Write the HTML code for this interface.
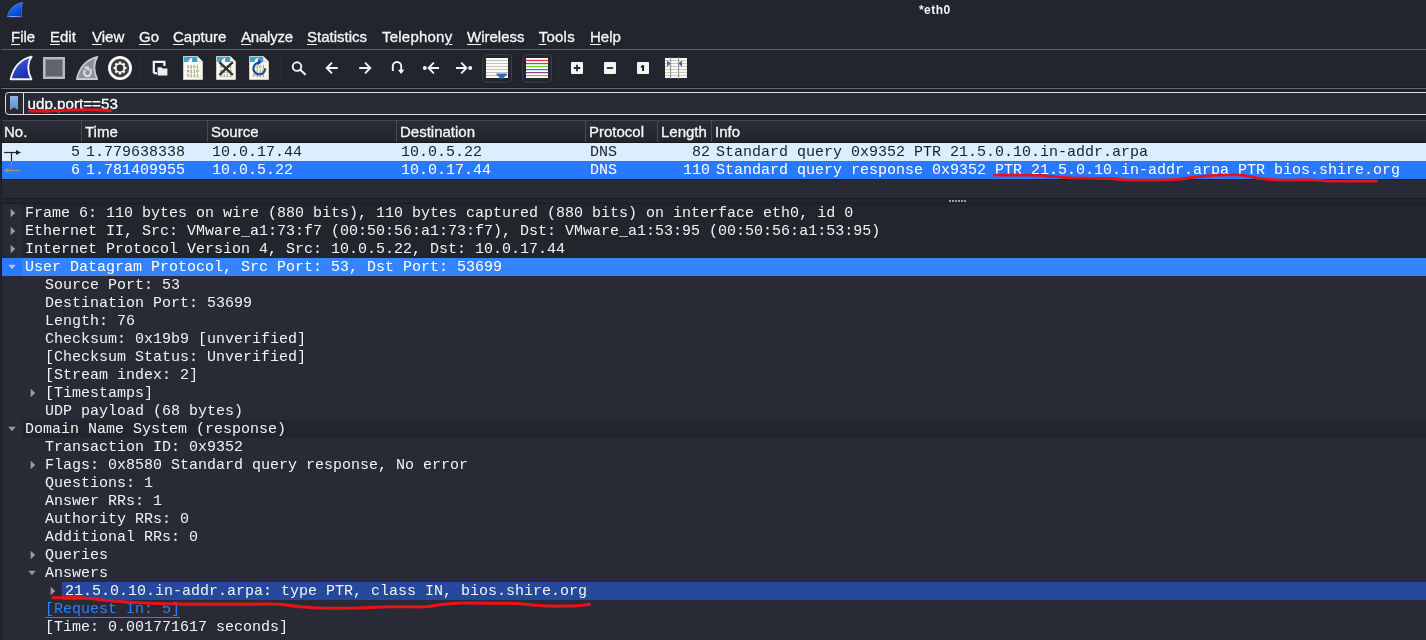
<!DOCTYPE html>
<html><head><meta charset="utf-8">
<style>
html,body{margin:0;padding:0;}
body{width:1426px;height:640px;overflow:hidden;background:#23252e;position:relative;font-family:"Liberation Sans",sans-serif;color:#fff;}
#root{position:absolute;left:0;top:0;width:1426px;height:640px;will-change:transform;overflow:hidden;}
.abs{position:absolute;}
#title{left:919px;top:1.5px;font-size:12px;font-weight:bold;line-height:16px;color:#f4f4f4;letter-spacing:0.45px;}
.menu{top:28px;font-size:15px;line-height:18px;color:#f6f6f6;white-space:nowrap;-webkit-text-stroke:0.3px #f6f6f6;}
.menu u{text-decoration:underline;text-underline-offset:2px;text-decoration-thickness:1.4px;}
.hl{left:1px;right:0;height:1px;}
.ico{position:absolute;overflow:visible;}
#fbar{left:0;top:89px;width:1426px;height:31px;background:#1e2027;}
#filter{left:5px;top:92px;width:1440px;height:21px;border:1px solid #e4e1da;border-radius:3.5px;background:#272935;}
#filter .sep{position:absolute;left:17px;top:0;width:1px;height:21px;background:#e4e1da;}
#ftext{left:27.5px;top:95px;font-size:15.2px;line-height:18px;color:#fff;-webkit-text-stroke:0.3px #fff;}
#lpane{left:1px;top:120px;width:1425px;height:78px;background:#282a36;border-left:1px solid #1b1c23;border-bottom:1px solid #1b1c23;}
#hdr{left:2px;top:120px;right:0;height:21px;background:linear-gradient(#2a2d37,#23252c);border-top:1px solid #43454d;border-bottom:1px solid #17181d;}
.hc{position:absolute;top:123px;font-size:15px;line-height:18px;color:#f6f6f6;-webkit-text-stroke:0.3px #f6f6f6;}
.hs{position:absolute;top:120px;width:1px;height:22px;background:#484a53;}
#tpane{left:1px;top:203px;width:1425px;height:437px;background:#282a36;border-left:1px solid #1b1c23;border-top:1px solid #1b1c23;}
.mono{font-family:"Liberation Mono",monospace;font-size:15px;line-height:18px;white-space:pre;}
.row{position:absolute;left:2px;right:0;height:18px;}
.row span{position:absolute;top:1px;}
.tr{position:absolute;left:2px;right:0;height:18px;}
.tr .t{position:absolute;top:1px;color:#f2f2f2;}
.tr .pb{position:absolute;left:20px;right:0;top:0;height:18px;background:#23252d;}
.tri{position:absolute;}
</style></head><body><div id="root">
<!-- title -->
<svg class="abs" style="left:6px;top:1px" width="18" height="17" viewBox="0 0 18 17"><path d="M1.2 15.9 C2.8 8.6 7.5 3 16.9 1.3 C15.2 5.6 15.2 11 15.9 15.9 Z" fill="url(#gtitle)" stroke="#8fbcff" stroke-opacity="0.55" stroke-width="0.6"/><path d="M1.2 15.9C5 14.6 11 14.8 15.9 15.9Z" fill="#9db8ff" opacity="0.8"/></svg>

<!-- menu -->
<div class="abs menu" style="left:11px"><u>F</u>ile</div>
<div class="abs menu" style="left:50px"><u>E</u>dit</div>
<div class="abs menu" style="left:92px"><u>V</u>iew</div>
<div class="abs menu" style="left:139px"><u>G</u>o</div>
<div class="abs menu" style="left:173px"><u>C</u>apture</div>
<div class="abs menu" style="left:241px;letter-spacing:-0.2px"><u>A</u>nalyze</div>
<div class="abs menu" style="left:307px"><u>S</u>tatistics</div>
<div class="abs menu" style="left:382px;letter-spacing:0.22px">Telephon<u>y</u></div>
<div class="abs menu" style="left:467px"><u>W</u>ireless</div>
<div class="abs menu" style="left:538.7px;letter-spacing:0.25px"><u>T</u>ools</div>
<div class="abs menu" style="left:590px"><u>H</u>elp</div>
<div class="abs hl" style="top:49px;background:#5c5e66"></div>
<div class="abs hl" style="top:87px;background:#1b1c23"></div><div class="abs hl" style="top:88px;background:#6c6e76"></div>
<!-- TOOLBAR -->
<div id="tb"><svg width="0" height="0" style="position:absolute"><defs>
<linearGradient id="gfin" x1="0" y1="0" x2="0.6" y2="1"><stop offset="0" stop-color="#5f7ce4"/><stop offset="0.5" stop-color="#3049c9"/><stop offset="1" stop-color="#1a2eae"/></linearGradient>
<linearGradient id="gtitle" x1="0.2" y1="0" x2="0.8" y2="1"><stop offset="0" stop-color="#2f86f5"/><stop offset="0.6" stop-color="#0b55dd"/><stop offset="1" stop-color="#0a3cc0"/></linearGradient>
<linearGradient id="gbm" x1="0" y1="0" x2="0" y2="1"><stop offset="0" stop-color="#8db4e2"/><stop offset="1" stop-color="#5b90cf"/></linearGradient>
<linearGradient id="gband" x1="0" y1="0" x2="1" y2="0"><stop offset="0" stop-color="#3aa6ec"/><stop offset="1" stop-color="#2a98e2"/></linearGradient>
<linearGradient id="gpaper" x1="0" y1="0" x2="1" y2="1"><stop offset="0" stop-color="#ffffff"/><stop offset="0.6" stop-color="#fbfbee"/><stop offset="1" stop-color="#efeedd"/></linearGradient>
</defs></svg>
<!-- start capture (blue fin) -->
<svg class="ico" style="left:9px;top:55px" width="24" height="26" viewBox="0 0 24 26">
<path d="M1.6 24.2 C4.2 13 10.5 4.5 22.6 1.6 C18.2 8 18.2 17 22.4 24.2 Z" fill="url(#gfin)" stroke="#f4f4f4" stroke-width="1.9" stroke-linejoin="round"/></svg>
<!-- stop (grey square) -->
<svg class="ico" style="left:43px;top:57px" width="22" height="22" viewBox="0 0 22 22">
<rect x="1.25" y="1.25" width="19.5" height="19.5" fill="#60636e" stroke="#b7bac6" stroke-width="2.5"/></svg>
<!-- restart (grey fin) -->
<svg class="ico" style="left:75px;top:55px" width="24" height="26" viewBox="0 0 24 26">
<path d="M1.8 24 C4.4 13 10.6 4.6 22.4 1.8 C18.4 8 18.4 17 22.2 24 Z" fill="#8d909a" stroke="#c6c9d3" stroke-width="1.8" stroke-linejoin="round"/>
<path d="M15.7 13.6V17.8A3.3 3.3 0 0 1 9.05 17.8C9.05 16.7 9.6 15.9 10.6 15.2" fill="none" stroke="#d6d9e2" stroke-width="2.1"/>
<path d="M8.4 12L14.2 11.3L13.8 16.3Z" fill="#d6d9e2"/></svg>
<!-- options gear -->
<svg class="ico" style="left:107px;top:55px" width="26" height="26" viewBox="0 0 26 26">
<circle cx="13" cy="13" r="10.6" fill="#3d3d3f" stroke="#fdfdfd" stroke-width="2.7"/>
<g fill="#fdfdfd"><circle cx="13" cy="13" r="5"/>
<g id="teeth"><rect x="11.8" y="6.6" width="2.4" height="2.6" rx="0.5"/><rect x="11.8" y="16.8" width="2.4" height="2.6" rx="0.5"/></g>
<use href="#teeth" transform="rotate(45 13 13)"/><use href="#teeth" transform="rotate(90 13 13)"/><use href="#teeth" transform="rotate(135 13 13)"/></g>
<circle cx="13" cy="13" r="3.4" fill="#353537"/></svg>
<!-- open file -->
<svg class="ico" style="left:152px;top:60px" width="17" height="17" viewBox="0 0 17 17">
<path d="M1.8 13.2V1.8H12.4V6" fill="none" stroke="#f4f4f4" stroke-width="2.2" stroke-linejoin="miter"/>
<path d="M1.8 13.2H5" fill="none" stroke="#f4f4f4" stroke-width="2.2"/>
<path d="M5.6 15.6V7.2H9.4L10.6 8.6H15.4V15.6Z" fill="#ededed"/></svg>
<!-- file icons -->
<svg class="ico" style="left:182px;top:55px" width="22" height="26" viewBox="0 0 22 26">
<g id="paper"><path d="M1.5 1.5H15.5L20.5 6.5V24.5H1.5Z" fill="url(#gpaper)" stroke="#cfccb4" stroke-width="1"/>
<path d="M2 2H15.3L19.6 7H2Z" fill="url(#gband)"/><path d="M15.3 1.8L20.2 6.7H15.3Z" fill="#fafaf0" stroke="#d8d6c4" stroke-width="0.5"/>
<path d="M6.2 7.2C6.6 5 8.2 3.2 10.6 2.6C9.8 4.2 9.8 5.8 10.4 7.2Z" fill="#fdfdf6"/></g>
<g id="bits" fill="none" stroke="#8c8c86" stroke-width="0.75"><ellipse cx="6.10" cy="11.60" rx="0.85" ry="1.3"/><path d="M8.50 10.90L9.30 10.20V13.10M8.40 13.00H10.20"/><ellipse cx="12.30" cy="11.60" rx="0.85" ry="1.3"/><path d="M14.70 10.90L15.50 10.20V13.10M14.60 13.00H16.40"/><ellipse cx="6.10" cy="16.00" rx="0.85" ry="1.3"/><path d="M8.50 15.30L9.30 14.60V17.50M8.40 17.40H10.20"/><path d="M11.60 15.30L12.40 14.60V17.50M11.50 17.40H13.30"/><ellipse cx="15.40" cy="16.00" rx="0.85" ry="1.3"/><ellipse cx="6.10" cy="20.30" rx="0.85" ry="1.3"/><path d="M8.50 19.60L9.30 18.90V21.80M8.40 21.70H10.20"/><path d="M11.60 19.60L12.40 18.90V21.80M11.50 21.70H13.30"/><path d="M14.70 19.60L15.50 18.90V21.80M14.60 21.70H16.40"/></g></svg>
<svg class="ico" style="left:215px;top:55px" width="22" height="26" viewBox="0 0 22 26"><use href="#paper"/><use href="#bits"/>
<path d="M4.4 7.2L17.8 20M17.8 7.2L4.4 20" stroke="#2d2f33" stroke-width="2.4" fill="none"/></svg>
<svg class="ico" style="left:248px;top:55px" width="22" height="26" viewBox="0 0 22 26"><use href="#paper"/><use href="#bits"/>
<path d="M17.2 13.3 A5.9 5.9 0 1 1 10.3 7.7" fill="none" stroke="#1c4a98" stroke-width="2.1"/>
<path d="M9.8 4.4L13.8 7.3L9.8 10.2Z" fill="#1c4a98"/></svg>
<!-- search -->
<svg class="ico" style="left:290px;top:60px" width="18" height="18" viewBox="0 0 18 18">
<circle cx="7" cy="6.6" r="4.3" fill="none" stroke="#f4f4f4" stroke-width="1.9"/><path d="M10.2 9.8L15.6 14.8" stroke="#f4f4f4" stroke-width="2.1" fill="none"/></svg>
<!-- back / forward -->
<svg class="ico" style="left:325px;top:61px" width="14" height="14" viewBox="0 0 14 14"><path d="M12.8 7H2.4M7 1.6L1.7 7L7 12.4" fill="none" stroke="#f4f4f4" stroke-width="1.9"/></svg>
<svg class="ico" style="left:358px;top:61px" width="14" height="14" viewBox="0 0 14 14"><path d="M1.2 7H11.6M7 1.6L12.3 7L7 12.4" fill="none" stroke="#f4f4f4" stroke-width="1.9"/></svg>
<!-- goto (u-turn) -->
<svg class="ico" style="left:390px;top:60px" width="16" height="16" viewBox="0 0 16 16">
<path d="M2.8 11V6.2A4.2 4.2 0 0 1 11.2 6.2V11" fill="none" stroke="#f4f4f4" stroke-width="1.9"/><path d="M7.9 9.8H14.3L11.1 14Z" fill="#f4f4f4"/></svg>
<!-- first / last -->
<svg class="ico" style="left:422px;top:61px" width="18" height="14" viewBox="0 0 18 14"><circle cx="2.8" cy="7" r="2" fill="#f4f4f4"/><path d="M17 7H7.4M11.8 1.6L6.6 7L11.8 12.4" fill="none" stroke="#f4f4f4" stroke-width="1.9"/></svg>
<svg class="ico" style="left:455px;top:61px" width="18" height="14" viewBox="0 0 18 14"><circle cx="15.2" cy="7" r="2" fill="#f4f4f4"/><path d="M1 7H10.6M6.2 1.6L11.4 7L6.2 12.4" fill="none" stroke="#f4f4f4" stroke-width="1.9"/></svg>
<!-- autoscroll button -->
<div class="abs" style="left:482px;top:54px;width:28px;height:27px;border:1px solid #3b3e49;border-radius:4px;background:#242731;box-shadow:0 0 0 1px #1f2128"></div>
<svg class="ico" style="left:486px;top:58px" width="22" height="20" viewBox="0 0 22 20"><rect width="22" height="20" fill="#fbfbf7"/>
<g stroke="#c4c3b6" stroke-width="1"><path d="M0 2.5H22M0 5.5H22M0 8.5H22M0 11.5H22M0 14.5H22M0 17.5H22"/></g>
<path d="M11 16.2H20.4L15.7 20.4Z" fill="#3568bd" stroke="#3568bd" stroke-width="1.4" stroke-linejoin="round"/></svg>
<!-- colorize button -->
<div class="abs" style="left:522px;top:54px;width:28px;height:27px;border:1px solid #3b3e49;border-radius:4px;background:#242731;box-shadow:0 0 0 1px #1f2128"></div>
<svg class="ico" style="left:526px;top:58px" width="22" height="20" viewBox="0 0 22 20"><rect width="22" height="20" fill="#fdfdfb"/>
<path d="M0 2.5H22" stroke="#ee2a2a" stroke-width="1.2"/><path d="M0 5.6H22" stroke="#3a6fc4" stroke-width="1.2"/><path d="M0 8.6H22" stroke="#6fd21c" stroke-width="1.2"/>
<path d="M0 11.6H22" stroke="#3a6fc4" stroke-width="1.2"/><path d="M0 14.6H22" stroke="#7a4a90" stroke-width="1.2"/><path d="M0 17.6H22" stroke="#c9a21a" stroke-width="1.2"/></svg>
<!-- zoom in/out/1 -->
<svg class="ico" style="left:570px;top:61px" width="14" height="14" viewBox="0 0 14 14"><rect x="1" y="1" width="12" height="12" rx="1" fill="#f3f3f1"/><path d="M3.8 7H10.2M7 3.8V10.2" stroke="#26272c" stroke-width="1.8"/></svg>
<svg class="ico" style="left:603px;top:61px" width="14" height="14" viewBox="0 0 14 14"><rect x="1" y="1" width="12" height="12" rx="1" fill="#f3f3f1"/><path d="M3.8 7H10.2" stroke="#26272c" stroke-width="1.8"/></svg>
<svg class="ico" style="left:636px;top:61px" width="14" height="14" viewBox="0 0 14 14"><rect x="1" y="1" width="12" height="12" rx="1" fill="#f3f3f1"/><path d="M7.1 4.2V10" stroke="#1f2025" stroke-width="2" fill="none"/><path d="M5 6.3L7 4.7" stroke="#1f2025" stroke-width="1.5" fill="none"/></svg>
<!-- resize columns -->
<svg class="ico" style="left:665px;top:57px" width="23" height="22" viewBox="0 0 23 22"><rect x="0" y="1" width="22" height="20" fill="#f8f8f4"/>
<g stroke="#cbcac0" stroke-width="1"><path d="M0 3.5H22M0 6.5H22M0 9.5H22M0 12.5H22M0 15.5H22M0 18.5H22"/></g>
<path d="M5.6 0V22M13.6 0V22" stroke="#8f8f88" stroke-width="1"/>
<path d="M2 3.4V9.8L5.6 6.6Z" fill="#2f66b8"/><path d="M17 3.4V9.8L13.4 6.6Z" fill="#2f66b8"/></svg>
<!-- toolbar separators -->
<div class="abs" style="left:140px;top:56px;width:1px;height:26px;background:#282a33"></div>
<div class="abs" style="left:280px;top:56px;width:1px;height:26px;background:#282a33"></div>
<div class="abs" style="left:558px;top:56px;width:1px;height:26px;background:#272932"></div>
</div>
<!-- filter -->
<div id="fbar" class="abs"></div>
<div id="filter" class="abs"><div class="sep"></div></div>
<svg class="abs" style="left:10px;top:96px" width="9" height="15" viewBox="0 0 9 15"><path d="M0 0H8V14.2L4 11.2L0 14.2Z" fill="url(#gbm)"/></svg>
<div id="ftext" class="abs">udp.port==53</div>
<!-- header -->
<div id="lpane" class="abs"></div>
<div id="tpane" class="abs"></div>
<div id="hdr" class="abs"></div>
<!-- LIST -->
<div id="list"><div class="hc" style="left:4px">No.</div>
<div class="hc" style="left:85px">Time</div>
<div class="hc" style="left:211px">Source</div>
<div class="hc" style="left:400px">Destination</div>
<div class="hc" style="left:589px">Protocol</div>
<div class="hc" style="left:661px">Length</div>
<div class="hc" style="left:715px">Info</div>
<div class="hs" style="left:81px"></div>
<div class="hs" style="left:207px"></div>
<div class="hs" style="left:396px"></div>
<div class="hs" style="left:585px"></div>
<div class="hs" style="left:657px"></div>
<div class="hs" style="left:711px"></div>
<div class="row mono" style="top:143px;background:#daeeff;color:#1d2026"><span style="left:0;width:78px;text-align:right">5</span><span style="left:84px">1.779638338</span><span style="left:210px">10.0.17.44</span><span style="left:399px">10.0.5.22</span><span style="left:588px">DNS</span><span style="left:585px;width:123px;text-align:right">82</span><span style="left:714px">Standard query 0x9352 PTR 21.5.0.10.in-addr.arpa</span></div>
<div class="row mono" style="top:161px;background:#2979ff;color:#ffffff"><span style="left:0;width:78px;text-align:right">6</span><span style="left:84px">1.781409955</span><span style="left:210px">10.0.5.22</span><span style="left:399px">10.0.17.44</span><span style="left:588px">DNS</span><span style="left:585px;width:123px;text-align:right">110</span><span style="left:714px">Standard query response 0x9352 PTR 21.5.0.10.in-addr.arpa PTR bios.shire.org</span></div>
<div class="abs" style="left:2px;right:0;top:179px;height:1px;background:#1f2026"></div>
<svg class="abs" style="left:0;top:143px" width="30" height="36" viewBox="0 0 30 36">
<path d="M4 9.5H16.5" stroke="#22252c" stroke-width="1.2" fill="none"/><path d="M16 7L21 9.5L16 12Z" fill="#22252c"/>
<path d="M11.5 9.5V27.5" stroke="#22252c" stroke-width="1.2" fill="none"/>
<path d="M11.5 18V27.5" stroke="#8f8a80" stroke-width="1.2" fill="none"/>
<path d="M6 27.5H20" stroke="#9c9588" stroke-width="1.2" fill="none"/><path d="M8.5 25L3.5 27.5L8.5 30Z" fill="#9c9588"/>
</svg>
<svg class="abs" style="left:949px;top:200px" width="18" height="2"><rect x="0" y="0" width="2" height="2" fill="#9c9c9c"/><rect x="3" y="0" width="2" height="2" fill="#9c9c9c"/><rect x="6" y="0" width="2" height="2" fill="#9c9c9c"/><rect x="9" y="0" width="2" height="2" fill="#9c9c9c"/><rect x="12" y="0" width="2" height="2" fill="#9c9c9c"/><rect x="15" y="0" width="2" height="2" fill="#9c9c9c"/></svg></div>
<!-- TREE -->
<div id="tree"><div class="tr" style="top:204px;"><div class="pb"></div><svg class="tri" style="left:7.5px;top:4px" width="6" height="10" viewBox="0 0 6 10"><path d="M0.7 0.7L5.2 5L0.7 9.3Z" fill="#9b9b9b"/></svg><span class="t mono" style="left:23px;">Frame 6: 110 bytes on wire (880 bits), 110 bytes captured (880 bits) on interface eth0, id 0</span></div>
<div class="tr" style="top:222px;"><div class="pb"></div><svg class="tri" style="left:7.5px;top:4px" width="6" height="10" viewBox="0 0 6 10"><path d="M0.7 0.7L5.2 5L0.7 9.3Z" fill="#9b9b9b"/></svg><span class="t mono" style="left:23px;">Ethernet II, Src: VMware_a1:73:f7 (00:50:56:a1:73:f7), Dst: VMware_a1:53:95 (00:50:56:a1:53:95)</span></div>
<div class="tr" style="top:240px;"><div class="pb"></div><svg class="tri" style="left:7.5px;top:4px" width="6" height="10" viewBox="0 0 6 10"><path d="M0.7 0.7L5.2 5L0.7 9.3Z" fill="#9b9b9b"/></svg><span class="t mono" style="left:23px;">Internet Protocol Version 4, Src: 10.0.5.22, Dst: 10.0.17.44</span></div>
<div class="tr" style="top:258px;background:#2979ff;"><div class="pb" style="background:#3583fd"></div><svg class="tri" style="left:6px;top:6px" width="8" height="6" viewBox="0 0 8 6"><path d="M0.3 0.7H7.7L4 5.3Z" fill="#a9c9ff"/></svg><span class="t mono" style="left:23px;color:#fff;">User Datagram Protocol, Src Port: 53, Dst Port: 53699</span></div>
<div class="tr" style="top:276px;"><span class="t mono" style="left:43px;">Source Port: 53</span></div>
<div class="tr" style="top:294px;"><span class="t mono" style="left:43px;">Destination Port: 53699</span></div>
<div class="tr" style="top:312px;"><span class="t mono" style="left:43px;">Length: 76</span></div>
<div class="tr" style="top:330px;"><span class="t mono" style="left:43px;">Checksum: 0x19b9 [unverified]</span></div>
<div class="tr" style="top:348px;"><span class="t mono" style="left:43px;">[Checksum Status: Unverified]</span></div>
<div class="tr" style="top:366px;"><span class="t mono" style="left:43px;">[Stream index: 2]</span></div>
<div class="tr" style="top:384px;"><svg class="tri" style="left:27.5px;top:4px" width="6" height="10" viewBox="0 0 6 10"><path d="M0.7 0.7L5.2 5L0.7 9.3Z" fill="#9b9b9b"/></svg><span class="t mono" style="left:43px;">[Timestamps]</span></div>
<div class="tr" style="top:402px;"><span class="t mono" style="left:43px;">UDP payload (68 bytes)</span></div>
<div class="tr" style="top:420px;"><div class="pb"></div><svg class="tri" style="left:6px;top:6px" width="8" height="6" viewBox="0 0 8 6"><path d="M0.3 0.7H7.7L4 5.3Z" fill="#9b9b9b"/></svg><span class="t mono" style="left:23px;">Domain Name System (response)</span></div>
<div class="tr" style="top:438px;"><span class="t mono" style="left:43px;">Transaction ID: 0x9352</span></div>
<div class="tr" style="top:456px;"><svg class="tri" style="left:27.5px;top:4px" width="6" height="10" viewBox="0 0 6 10"><path d="M0.7 0.7L5.2 5L0.7 9.3Z" fill="#9b9b9b"/></svg><span class="t mono" style="left:43px;">Flags: 0x8580 Standard query response, No error</span></div>
<div class="tr" style="top:474px;"><span class="t mono" style="left:43px;">Questions: 1</span></div>
<div class="tr" style="top:492px;"><span class="t mono" style="left:43px;">Answer RRs: 1</span></div>
<div class="tr" style="top:510px;"><span class="t mono" style="left:43px;">Authority RRs: 0</span></div>
<div class="tr" style="top:528px;"><span class="t mono" style="left:43px;">Additional RRs: 0</span></div>
<div class="tr" style="top:546px;"><svg class="tri" style="left:27.5px;top:4px" width="6" height="10" viewBox="0 0 6 10"><path d="M0.7 0.7L5.2 5L0.7 9.3Z" fill="#9b9b9b"/></svg><span class="t mono" style="left:43px;">Queries</span></div>
<div class="tr" style="top:564px;"><svg class="tri" style="left:26px;top:6px" width="8" height="6" viewBox="0 0 8 6"><path d="M0.3 0.7H7.7L4 5.3Z" fill="#9b9b9b"/></svg><span class="t mono" style="left:43px;">Answers</span></div>
<div class="tr" style="top:582px;"><div style="position:absolute;left:60px;right:0;top:0;height:18px;background:#254a9b"></div><svg class="tri" style="left:47.5px;top:4px" width="6" height="10" viewBox="0 0 6 10"><path d="M0.7 0.7L5.2 5L0.7 9.3Z" fill="#9b9b9b"/></svg><span class="t mono" style="left:63px;">21.5.0.10.in-addr.arpa: type PTR, class IN, bios.shire.org</span></div>
<div class="tr" style="top:600px;"><span class="t mono" style="left:43px;color:#2a82ff;text-decoration:underline;text-underline-offset:3.5px;text-decoration-thickness:1.2px;text-decoration-skip-ink:none;">[Request In: 5]</span></div>
<div class="tr" style="top:618px;"><span class="t mono" style="left:43px;">[Time: 0.001771617 seconds]</span></div>
<div class="tr" style="top:636px;"></div>
<svg class="abs" style="left:0;top:0;pointer-events:none" width="1426" height="640" viewBox="0 0 1426 640" fill="none" stroke="#e3141b" stroke-linecap="round" stroke-linejoin="round">
<path d="M29.5 111.1 C32.9 111.1 44.2 111.2 50.0 111.0 C55.8 110.8 58.2 110.4 64.0 110.2 C69.8 110.0 78.6 109.8 85.0 109.8 C91.4 109.8 98.3 109.8 102.6 110.0 C106.8 110.2 109.2 110.8 110.5 111.0" stroke-width="3"/>
<path d="M994.5 175.1 C998.8 175.1 1012.2 175.0 1020.0 175.1 C1027.8 175.2 1034.0 175.0 1041.0 175.4 C1048.0 175.8 1055.0 176.8 1062.0 177.3 C1069.0 177.8 1074.8 178.0 1083.0 178.2 C1091.2 178.4 1104.0 178.2 1111.0 178.5 C1118.0 178.8 1119.2 179.6 1125.0 179.9 C1130.8 180.2 1139.0 180.1 1146.0 180.1 C1153.0 180.1 1161.3 180.1 1167.0 179.9 C1172.7 179.8 1175.3 179.7 1180.0 179.2 C1184.7 178.7 1189.0 177.7 1195.4 177.0 C1201.8 176.3 1210.9 175.5 1218.6 175.2 C1226.3 174.9 1235.3 174.7 1241.7 175.2 C1248.1 175.7 1250.8 177.2 1257.0 178.0 C1263.2 178.8 1269.8 179.8 1278.8 180.1 C1287.8 180.4 1303.0 179.7 1311.0 179.8 C1319.0 180.0 1320.1 180.8 1326.6 181.0 C1333.1 181.2 1341.5 181.0 1349.8 181.0 C1358.1 181.0 1371.9 181.0 1376.3 181.0" stroke-width="2.8"/>
<path d="M53.0 597.8 C57.8 597.8 72.0 597.3 82.0 597.8 C92.0 598.3 101.8 600.1 113.0 601.0 C124.2 601.9 136.8 602.7 149.0 603.2 C161.2 603.7 173.8 604.0 186.0 604.1 C198.2 604.2 209.8 604.1 222.0 604.1 C234.2 604.1 249.3 604.1 259.0 604.1 C268.7 604.1 273.7 603.9 280.0 604.3 C286.3 604.7 290.5 605.8 297.0 606.4 C303.5 607.0 308.8 607.7 319.0 608.0 C329.2 608.3 347.7 608.2 358.0 608.0 C368.3 607.8 373.5 607.2 381.0 607.0 C388.5 606.8 395.5 606.8 403.0 606.7 C410.5 606.7 419.7 607.1 426.0 606.7 C432.3 606.4 435.0 605.2 441.0 604.6 C447.0 604.0 453.8 603.2 462.0 603.0 C470.2 602.8 481.1 603.1 490.0 603.2 C498.9 603.3 508.4 603.2 515.4 603.5 C522.4 603.8 526.9 604.5 532.0 604.9 C537.1 605.3 540.2 605.8 546.0 606.0 C551.8 606.2 561.2 606.1 567.0 606.0 C572.8 605.9 577.2 605.8 581.0 605.5 C584.8 605.2 588.1 604.6 589.5 604.4" stroke-width="3.1"/>
</svg></div>
</div>
<div id="title" class="abs">*eth0</div>
</body></html>
